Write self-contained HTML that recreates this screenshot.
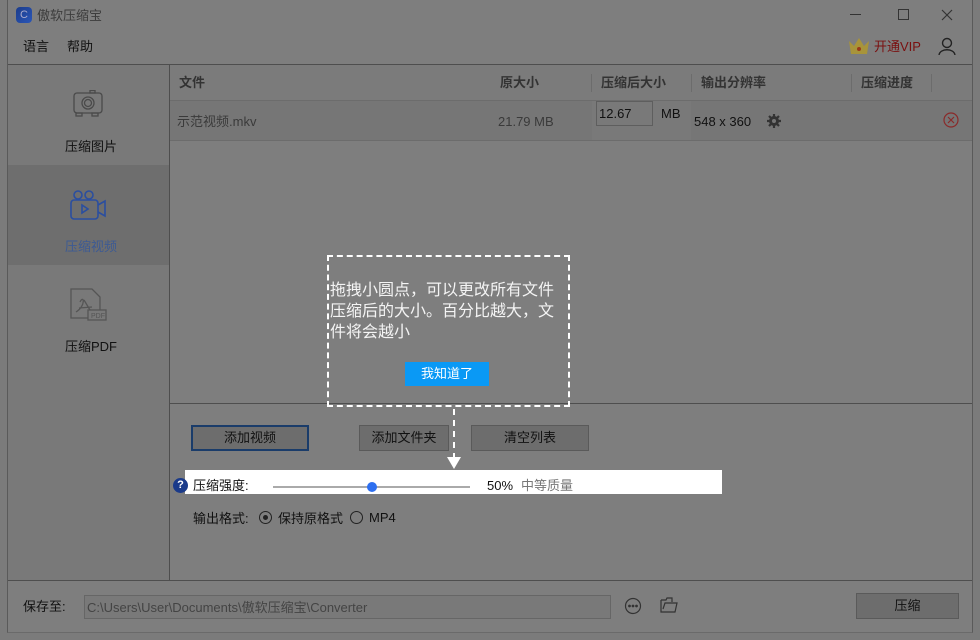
<!DOCTYPE html>
<html><head><meta charset="utf-8"><style>
*{margin:0;padding:0;box-sizing:border-box}
body{width:980px;height:640px;background:#7b7b7b;font-family:"Liberation Sans","Noto Sans CJK SC",sans-serif;font-size:13px;line-height:16px;color:#111;position:relative;overflow:hidden}
.a{position:absolute;white-space:nowrap}
.win{left:7px;top:0;width:966px;height:633px;background:#7e7e7e;border-left:1px solid #5a5a5a;border-right:1px solid #5a5a5a;border-bottom:1px solid #6a6a6a}
.hl{height:1px;background:#4e4e4e}
.vl{width:1px;background:#4e4e4e}
.btn{border:1px solid #5a5a5a;background:#6d6d6d;text-align:center;line-height:23px;font-size:13px;color:#111}
</style></head><body>
<div class="a win"></div>
<div class="a" style="left:16px;top:7px;width:16px;height:16px;border-radius:4px;background:linear-gradient(135deg,#1c3c8a,#2a56b8);color:#aac;font-size:11px;text-align:center;line-height:16px">C</div>
<div class="a" style="left:37px;top:8px;font-size:13px;color:#3c3c3c">傲软压缩宝</div>
<div class="a" style="left:850px;top:14px;width:11px;height:1px;background:#333"></div>
<div class="a" style="left:898px;top:9px;width:11px;height:11px;border:1px solid #333"></div>
<svg class="a" style="left:941px;top:9px" width="12" height="12" stroke="#333" stroke-width="1.2"><path d="M1 1 L11 11 M11 1 L1 11"/></svg>
<div class="a" style="left:23px;top:39px">语言</div>
<div class="a" style="left:67px;top:39px">帮助</div>
<svg class="a" style="left:848px;top:36px" width="22" height="20"><path d="M1 5 L6 10 L11 2 L16 10 L21 5 L19 18 L3 18Z" fill="#a8943a"/><circle cx="11" cy="13" r="2" fill="#9a3a1a"/></svg>
<div class="a" style="left:874px;top:39px;color:#7a1010">开通VIP</div>
<svg class="a" style="left:938px;top:37px" width="18" height="18" fill="none" stroke="#222" stroke-width="1.4"><circle cx="9" cy="6" r="4.5"/><path d="M1 18 C2 11 16 11 17 18"/></svg>
<div class="a hl" style="left:8px;top:64px;width:964px"></div>
<div class="a" style="left:8px;top:65px;width:161px;height:515px;background:#797979"></div>
<div class="a" style="left:8px;top:165px;width:161px;height:100px;background:#6e6e6e"></div>
<div class="a vl" style="left:169px;top:65px;height:515px"></div>
<svg class="a" style="left:73px;top:90px" width="32" height="30" fill="none" stroke="#4a4a4a" stroke-width="1.3"><rect x="1" y="3" width="28" height="20" rx="3"/><circle cx="15" cy="13" r="6"/><circle cx="15" cy="13" r="3.5"/><rect x="3" y="23" width="6" height="3"/><rect x="19" y="23" width="6" height="3"/><rect x="17" y="0.5" width="5" height="2.5"/></svg>
<div class="a" style="left:65px;top:139px">压缩图片</div>
<svg class="a" style="left:70px;top:190px" width="38" height="32" fill="none" stroke="#2a4ea0" stroke-width="1.6"><circle cx="8" cy="5" r="4"/><circle cx="19" cy="5" r="4"/><rect x="1" y="10" width="27" height="19" rx="3"/><path d="M28 15 L35 11 L35 26 L28 22"/><path d="M12 15 L18 19 L12 23Z"/></svg>
<div class="a" style="left:65px;top:239px;color:#3c5a94">压缩视频</div>
<svg class="a" style="left:70px;top:288px" width="38" height="36" fill="none" stroke="#555" stroke-width="1.3"><path d="M1 1 L22 1 L30 9 L30 30 L1 30Z"/><path d="M10 14 C14 6 16 18 6 24 M14 12 L20 22 M9 20 L22 19"/><rect x="18" y="22" width="18" height="10" fill="#797979"/><text x="21" y="30" font-size="7" fill="#555" stroke="none">PDF</text></svg>
<div class="a" style="left:65px;top:339px">压缩PDF</div>
<div class="a" style="left:170px;top:65px;width:802px;height:35px;background:#7b7b7b"></div>
<div class="a" style="left:170px;top:100px;width:802px;height:41px;background:#767676;border-top:1px solid #6c6c6c;border-bottom:1px solid #6c6c6c"></div>
<div class="a" style="left:179px;top:75px;font-weight:bold;color:#333">文件</div>
<div class="a" style="left:500px;top:75px;font-weight:bold;color:#333">原大小</div>
<div class="a vl" style="left:591px;top:74px;height:18px;background:#6c6c6c"></div>
<div class="a" style="left:601px;top:75px;font-weight:bold;color:#333">压缩后大小</div>
<div class="a vl" style="left:691px;top:74px;height:18px;background:#6c6c6c"></div>
<div class="a" style="left:701px;top:75px;font-weight:bold;color:#333">输出分辨率</div>
<div class="a vl" style="left:851px;top:74px;height:18px;background:#6c6c6c"></div>
<div class="a" style="left:861px;top:75px;font-weight:bold;color:#333">压缩进度</div>
<div class="a vl" style="left:931px;top:74px;height:18px;background:#6c6c6c"></div>
<div class="a" style="left:177px;top:114px;color:#3a3a3a">示范视频.mkv</div>
<div class="a" style="left:498px;top:114px;color:#3a3a3a">21.79 MB</div>
<div class="a" style="left:592px;top:101px;width:99px;height:39px;background:#797979"></div>
<div class="a" style="left:596px;top:101px;width:57px;height:25px;border:1px solid #5e5e5e;padding:4px 0 0 2px;color:#111">12.67</div>
<div class="a" style="left:661px;top:106px">MB</div>
<div class="a" style="left:694px;top:114px">548 x 360</div>
<svg class="a" style="left:767px;top:114px" width="14" height="14"><circle cx="7" cy="7" r="5" fill="#333"/><g stroke="#333" stroke-width="2.2"><path d="M7 0 V14 M0 7 H14 M2 2 L12 12 M12 2 L2 12"/></g><circle cx="7" cy="7" r="2" fill="#767676"/></svg>
<svg class="a" style="left:943px;top:112px" width="16" height="16" fill="none" stroke="#8a2a2a" stroke-width="1.2"><circle cx="8" cy="8" r="7"/><path d="M5 5 L11 11 M11 5 L5 11"/></svg>
<div class="a hl" style="left:170px;top:403px;width:802px"></div>
<div class="a btn" style="left:191px;top:425px;width:118px;height:26px;border:2px solid #1a3c6a;line-height:22px">添加视频</div>
<div class="a btn" style="left:359px;top:425px;width:90px;height:26px">添加文件夹</div>
<div class="a btn" style="left:471px;top:425px;width:118px;height:26px">清空列表</div>
<div class="a" style="left:185px;top:470px;width:537px;height:24px;background:#fff"></div>
<div class="a" style="left:173px;top:478px;width:15px;height:15px;border-radius:50%;background:#1a3a8a;color:#fff;font-size:11px;font-weight:bold;text-align:center;line-height:15px">?</div>
<div class="a" style="left:193px;top:478px">压缩强度:</div>
<div class="a" style="left:273px;top:486px;width:197px;height:2px;background:#aaa"></div>
<div class="a" style="left:367px;top:482px;width:10px;height:10px;border-radius:50%;background:#2d6ff0"></div>
<div class="a" style="left:487px;top:478px">50%</div>
<div class="a" style="left:521px;top:478px;color:#777">中等质量</div>
<div class="a" style="left:193px;top:511px">输出格式:</div>
<div class="a" style="left:259px;top:511px;width:13px;height:13px;border:1px solid #222;border-radius:50%"></div>
<div class="a" style="left:263px;top:515px;width:5px;height:5px;background:#222;border-radius:50%"></div>
<div class="a" style="left:278px;top:511px">保持原格式</div>
<div class="a" style="left:350px;top:511px;width:13px;height:13px;border:1px solid #222;border-radius:50%"></div>
<div class="a" style="left:369px;top:510px">MP4</div>
<div class="a hl" style="left:8px;top:580px;width:964px"></div>
<div class="a" style="left:23px;top:599px">保存至:</div>
<div class="a" style="left:84px;top:595px;width:527px;height:24px;border:1px solid #666;background:#797979;color:#444;padding:4px 0 0 2px">C:\Users\User\Documents\傲软压缩宝\Converter</div>
<svg class="a" style="left:624px;top:597px" width="18" height="18" fill="none" stroke="#333" stroke-width="1.2"><circle cx="9" cy="9" r="7.5"/><circle cx="5.5" cy="9" r=".8" fill="#333"/><circle cx="9" cy="9" r=".8" fill="#333"/><circle cx="12.5" cy="9" r=".8" fill="#333"/></svg>
<svg class="a" style="left:660px;top:597px" width="18" height="16" fill="none" stroke="#333" stroke-width="1.2"><path d="M1 3 L1 15 L15 15 L17 6 L5 6 L3 12 M1 3 L6 3 L7 1 L12 1 L12 5"/></svg>
<div class="a btn" style="left:856px;top:593px;width:103px;height:26px">压缩</div>
<div class="a" style="left:327px;top:255px;width:243px;height:152px;border:2px dashed #fff"></div>
<div class="a" style="left:330px;top:280px;color:#f4f4f4;font-size:16px;line-height:21px">拖拽小圆点，可以更改所有文件<br>压缩后的大小。百分比越大，文<br>件将会越小</div>
<div class="a" style="left:405px;top:362px;width:84px;height:24px;background:#0a99f5;color:#fff;text-align:center;line-height:24px;font-size:13px">我知道了</div>
<div class="a" style="left:453px;top:409px;width:0;height:50px;border-left:2px dashed #fff"></div>
<div class="a" style="left:447px;top:457px;width:0;height:0;border-left:7px solid transparent;border-right:7px solid transparent;border-top:12px solid #fff"></div>
</body></html>
